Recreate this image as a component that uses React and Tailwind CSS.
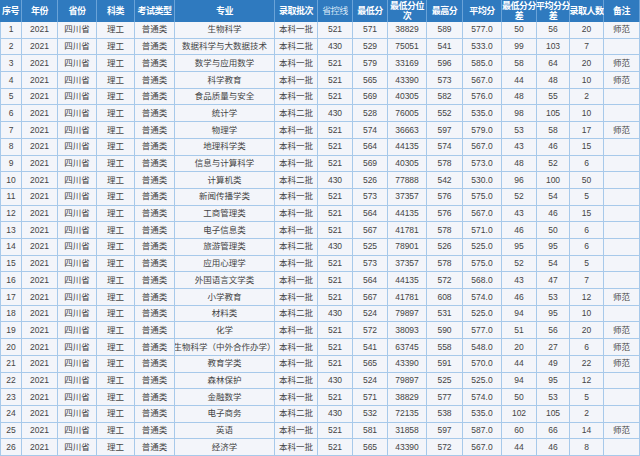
import React from "react";

const headers = [
  "序号", "年份", "省份", "科类", "考试类型", "专业", "录取批次", "省控线",
  "最低分", "最低分位\n次", "最高分", "平均分", "最低分分\n差", "平均分分\n差", "录取人数", "备注",
];

// major, batch, line, min, rank, max, avg, diffMin, diffAvg, count, note
const rows = [
  ["生物科学", "本科一批", 521, 571, 38829, 589, "577.0", 50, 56, 20, "师范"],
  ["数据科学与大数据技术", "本科二批", 430, 529, 75051, 541, "533.0", 99, 103, 7, ""],
  ["数学与应用数学", "本科一批", 521, 579, 33169, 596, "585.0", 58, 64, 20, "师范"],
  ["科学教育", "本科一批", 521, 565, 43390, 573, "567.0", 44, 48, 10, "师范"],
  ["食品质量与安全", "本科一批", 521, 569, 40305, 582, "576.0", 48, 55, 2, ""],
  ["统计学", "本科二批", 430, 528, 76005, 552, "535.0", 98, 105, 10, ""],
  ["物理学", "本科一批", 521, 574, 36663, 597, "579.0", 53, 58, 17, "师范"],
  ["地理科学类", "本科一批", 521, 564, 44135, 574, "567.0", 43, 46, 15, ""],
  ["信息与计算科学", "本科一批", 521, 569, 40305, 578, "573.0", 48, 52, 6, ""],
  ["计算机类", "本科二批", 430, 526, 77888, 542, "530.0", 96, 100, 50, ""],
  ["新闻传播学类", "本科一批", 521, 573, 37357, 576, "575.0", 52, 54, 5, ""],
  ["工商管理类", "本科一批", 521, 564, 44135, 576, "567.0", 43, 46, 15, ""],
  ["电子信息类", "本科一批", 521, 567, 41781, 578, "571.0", 46, 50, 6, ""],
  ["旅游管理类", "本科二批", 430, 525, 78901, 526, "525.0", 95, 95, 6, ""],
  ["应用心理学", "本科一批", 521, 573, 37357, 578, "575.0", 52, 54, 5, ""],
  ["外国语言文学类", "本科一批", 521, 564, 44135, 572, "568.0", 43, 47, 7, ""],
  ["小学教育", "本科一批", 521, 567, 41781, 608, "574.0", 46, 53, 12, "师范"],
  ["材料类", "本科二批", 430, 524, 79897, 531, "525.0", 94, 95, 10, ""],
  ["化学", "本科一批", 521, 572, 38093, 590, "577.0", 51, 56, 20, "师范"],
  ["生物科学（中外合作办学）", "本科一批", 521, 541, 63745, 558, "548.0", 20, 27, 6, "师范"],
  ["教育学类", "本科一批", 521, 565, 43390, 591, "570.0", 44, 49, 22, "师范"],
  ["森林保护", "本科二批", 430, 524, 79897, 525, "525.0", 94, 95, 12, ""],
  ["金融数学", "本科一批", 521, 571, 38829, 577, "574.0", 50, 53, 5, ""],
  ["电子商务", "本科二批", 430, 532, 72135, 538, "535.0", 102, 105, 2, ""],
  ["英语", "本科一批", 521, 581, 31858, 597, "587.0", 60, 66, 14, "师范"],
  ["经济学", "本科一批", 521, 565, 43390, 572, "567.0", 44, 46, 8, ""],
];

export default function App() {
  return (
    <div
      className="w-[640px] h-[456px] overflow-hidden bg-[#f3f5fa]"
      style={{ fontFamily: '"Liberation Sans", "Noto Sans CJK SC", sans-serif' }}
    >
      <div className="grid h-[456px] grid-cols-[22px_36px_39px_38px_40px_100px_43px_35px_35px_39px_36px_39px_35px_33px_34px_36px] grid-rows-[22px_repeat(26,minmax(0,1fr))]">
        {headers.map((h) => (
          <div
            key={h}
            className={
              "flex items-center justify-center text-center leading-[10px] bg-[#2f7abf] border-r border-[#6aa3d8] text-[9px] whitespace-pre tracking-[-0.5px] " +
              (h === "省控线" ? "font-normal text-[#d6e6f6]" : "font-bold text-white")
            }
          >
            {h}
          </div>
        ))}
        {rows.map((r, i) => {
          const cells = [i + 1, 2021, "四川省", "理工", "普通类", ...r];
          return cells.map((c, j) => (
            <div
              key={i + "-" + j}
              className={
                "flex items-center justify-center whitespace-nowrap overflow-hidden border-r border-b border-[#a7c9ea] text-[8.5px] text-[#444] " +
                (j === 0 ? "border-l" : "")
              }
            >
              {c}
            </div>
          ));
        })}
      </div>
    </div>
  );
}
